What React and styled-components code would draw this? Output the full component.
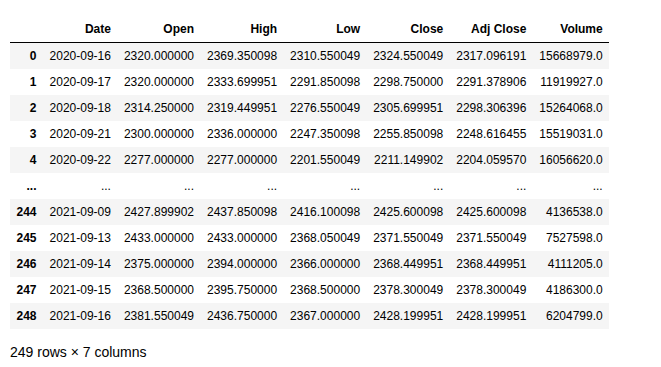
import styled, { createGlobalStyle } from 'styled-components';

const GlobalStyle = createGlobalStyle`
  body {
    margin: 0;
    background: #fff;
    font-family: 'Liberation Sans', Arial, sans-serif;
    color: #000;
  }
`;

const columns = ['Date', 'Open', 'High', 'Low', 'Close', 'Adj Close', 'Volume'];

const rows = [
  ['0', '2020-09-16', '2320.000000', '2369.350098', '2310.550049', '2324.550049', '2317.096191', '15668979.0'],
  ['1', '2020-09-17', '2320.000000', '2333.699951', '2291.850098', '2298.750000', '2291.378906', '11919927.0'],
  ['2', '2020-09-18', '2314.250000', '2319.449951', '2276.550049', '2305.699951', '2298.306396', '15264068.0'],
  ['3', '2020-09-21', '2300.000000', '2336.000000', '2247.350098', '2255.850098', '2248.616455', '15519031.0'],
  ['4', '2020-09-22', '2277.000000', '2277.000000', '2201.550049', '2211.149902', '2204.059570', '16056620.0'],
  ['...', '...', '...', '...', '...', '...', '...', '...'],
  ['244', '2021-09-09', '2427.899902', '2437.850098', '2416.100098', '2425.600098', '2425.600098', '4136538.0'],
  ['245', '2021-09-13', '2433.000000', '2433.000000', '2368.050049', '2371.550049', '2371.550049', '7527598.0'],
  ['246', '2021-09-14', '2375.000000', '2394.000000', '2366.000000', '2368.449951', '2368.449951', '4111205.0'],
  ['247', '2021-09-15', '2368.500000', '2395.750000', '2368.500000', '2378.300049', '2378.300049', '4186300.0'],
  ['248', '2021-09-16', '2381.550049', '2436.750000', '2367.000000', '2428.199951', '2428.199951', '6204799.0'],
];

const Output = styled.div`
  padding: 16px 10px 0 10px;
`;

const Frame = styled.table`
  border-collapse: collapse;
  border: none;
  font-size: 12px;
  table-layout: auto;
`;

const HeadRow = styled.tr`
  border-bottom: 1px solid #000;
`;

const HeadCell = styled.th`
  text-align: right;
  font-weight: bold;
  padding: 0 6.5px;
  height: 26px;
  line-height: 14px;
  white-space: nowrap;
`;

const BodyRow = styled.tr`
  background: ${({ $striped }) => ($striped ? '#f5f5f5' : '#fff')};
`;

const IndexCell = styled.th`
  text-align: right;
  font-weight: bold;
  padding: 0 6.5px;
  height: 26px;
  line-height: 14px;
`;

const Cell = styled.td`
  text-align: right;
  padding: 0 6.5px;
  height: 26px;
  line-height: 14px;
  white-space: nowrap;
`;

const Shape = styled.p`
  margin: 15px 0 0 0;
  font-size: 14px;
  line-height: 16px;
`;

export default function App() {
  return (
    <>
      <GlobalStyle />
      <Output>
        <Frame>
          <thead>
            <HeadRow>
              <HeadCell />
              {columns.map(c => (
                <HeadCell key={c}>{c}</HeadCell>
              ))}
            </HeadRow>
          </thead>
          <tbody>
            {rows.map((r, i) => (
              <BodyRow key={r[0] + i} $striped={i % 2 === 0 && r[0] !== '...'}>
                <IndexCell>{r[0]}</IndexCell>
                {r.slice(1).map((v, j) => (
                  <Cell key={j}>{v}</Cell>
                ))}
              </BodyRow>
            ))}
          </tbody>
        </Frame>
        <Shape>249 rows × 7 columns</Shape>
      </Output>
    </>
  );
}
